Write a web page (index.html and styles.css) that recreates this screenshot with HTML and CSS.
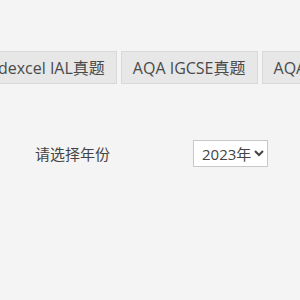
FILE: index.html
```html
<!DOCTYPE html>
<html lang="zh-CN">
<head>
<meta charset="utf-8">
<link rel="stylesheet" href="styles.css">
</head>
<body>
<div class="tabs">
  <div class="tab">Edexcel IAL真题</div>
  <div class="tab">AQA IGCSE真题</div>
  <div class="tab">AQA A-level真题</div>
</div>
<div class="form-row">
  <label class="label" for="year">请选择年份</label>
  <select id="year" class="year">
    <option>2023年</option>
    <option>2022年</option>
  </select>
</div>
</body>
</html>
```
FILE: styles.css
```css
html, body {
  margin: 0;
  padding: 0;
  background: #f4f4f4;
  overflow: hidden;
}
body {
  font-family: "Open Sans", "Noto Sans CJK SC", sans-serif;
  color: #444;
  width: 300px;
  height: 300px;
}
.tabs {
  display: flex;
  gap: 4px;
  padding-top: 51px;
  margin-left: -23px;
  white-space: nowrap;
}
.tab {
  flex: none;
  box-sizing: border-box;
  height: 33px;
  line-height: 32px;
  padding: 0 11px;
  border: 1px solid #d9d9d9;
  background: #e7e7e7;
  font-size: 16px;
  color: #4a4a4a;
}
.form-row {
  display: flex;
  align-items: center;
  margin-top: 56px;
  padding-left: 35px;
}
.label {
  font-size: 15px;
  width: 158px;
  color: #444;
}
.year {
  box-sizing: border-box;
  width: 75px;
  height: 27px;
  font-family: "Open Sans", "Noto Sans CJK SC", sans-serif;
  font-size: 15px;
  color: #444;
  background: #fff;
  border: 1px solid #c8c8c8;
  border-radius: 0;
  padding: 0 0 0 4px;
}
```
